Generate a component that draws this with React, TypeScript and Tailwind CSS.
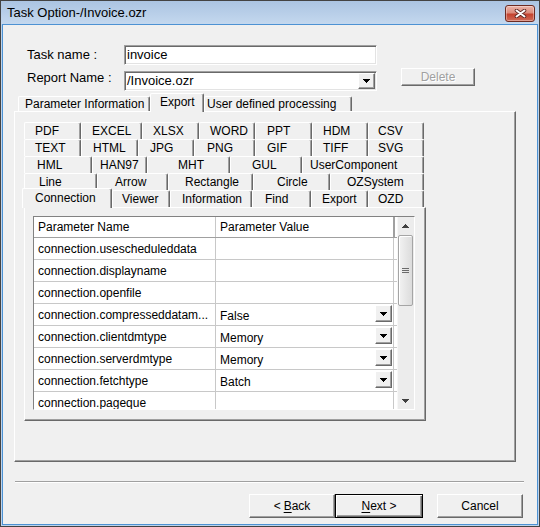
import React from "react";

// 탭 한 칸 (폭, 글자 왼쪽 여백)
type Tab = { label: string; w: string; pl: string };

// 파라미터 행
type Row = { name: string; value: string; combo: boolean };

const RAISED =
    "border border-t-white border-l-white border-r-[#696969] border-b-[#696969] shadow-[inset_-1px_-1px_0_#a0a0a0] bg-[#f0f0f0]";
const SUNKEN =
    "border border-t-[#a0a0a0] border-l-[#a0a0a0] border-r-white border-b-white shadow-[inset_1px_1px_0_#696969,inset_-1px_-1px_0_#e3e3e3] bg-white";
const TAB =
    "flex shrink-0 items-center rounded-t-[2px] border-t border-l border-r border-t-white border-l-white border-r-[#696969] shadow-[inset_-1px_0_0_#a0a0a0] bg-[#f0f0f0] whitespace-nowrap";

// 내보내기 탭 줄 (위에서 아래 순서)
const TAB_ROWS: Tab[][] = [
    [
        { label: "PDF", w: "w-[57px]", pl: "pl-[10px]" },
        { label: "EXCEL", w: "w-[61px]", pl: "pl-[10px]" },
        { label: "XLSX", w: "w-[57px]", pl: "pl-[10px]" },
        { label: "WORD", w: "w-[56px]", pl: "pl-[10px]" },
        { label: "PPT", w: "w-[57px]", pl: "pl-[11px]" },
        { label: "HDM", w: "w-[56px]", pl: "pl-[10px]" },
        { label: "CSV", w: "w-[56px]", pl: "pl-[9px]" },
    ],
    [
        { label: "TEXT", w: "w-[57px]", pl: "pl-[10px]" },
        { label: "HTML", w: "w-[57px]", pl: "pl-[11px]" },
        { label: "JPG", w: "w-[56px]", pl: "pl-[11px]" },
        { label: "PNG", w: "w-[61px]", pl: "pl-[12px]" },
        { label: "GIF", w: "w-[57px]", pl: "pl-[11px]" },
        { label: "TIFF", w: "w-[56px]", pl: "pl-[10px]" },
        { label: "SVG", w: "w-[56px]", pl: "pl-[9px]" },
    ],
    [
        { label: "HML", w: "w-[68px]", pl: "pl-[12px]" },
        { label: "HAN97", w: "w-[55px]", pl: "pl-[7px]" },
        { label: "MHT", w: "w-[83px]", pl: "pl-[30px]" },
        { label: "GUL", w: "w-[72px]", pl: "pl-[21px]" },
        { label: "UserComponent", w: "w-[122px]", pl: "pl-[7px]" },
    ],
    [
        { label: "Line", w: "w-[73px]", pl: "pl-[14px]" },
        { label: "Arrow", w: "w-[71px]", pl: "pl-[17px]" },
        { label: "Rectangle", w: "w-[85px]", pl: "pl-[16px]" },
        { label: "Circle", w: "w-[77px]", pl: "pl-[23px]" },
        { label: "OZSystem", w: "w-[94px]", pl: "pl-[16px]" },
    ],
];

const FRONT_ROW: Tab[] = [
    { label: "Connection", w: "w-[90px]", pl: "pl-[12px]" },
    { label: "Viewer", w: "w-[58px]", pl: "pl-[9px]" },
    { label: "Information", w: "w-[82px]", pl: "pl-[11px]" },
    { label: "Find", w: "w-[59px]", pl: "pl-[12px]" },
    { label: "Export", w: "w-[57px]", pl: "pl-[10px]" },
    { label: "OZD", w: "w-[56px]", pl: "pl-[9px]" },
];

const ROWS: Row[] = [
    { name: "connection.usescheduleddata", value: "", combo: false },
    { name: "connection.displayname", value: "", combo: false },
    { name: "connection.openfile", value: "", combo: false },
    { name: "connection.compresseddatam...", value: "False", combo: true },
    { name: "connection.clientdmtype", value: "Memory", combo: true },
    { name: "connection.serverdmtype", value: "Memory", combo: true },
    { name: "connection.fetchtype", value: "Batch", combo: true },
    { name: "connection.pageque", value: "", combo: false },
];

// 콤보 화살표
function Tri({ up = false, color = "#000" }: { up?: boolean; color?: string }) {
    return (
        <svg width="7" height="4" viewBox="0 0 7 4" shapeRendering="crispEdges">
            <path d={up ? "M0 4h7L3.5 0z" : "M0 0h7L3.5 4z"} fill={color} />
        </svg>
    );
}

function ComboButton({ className = "" }: { className?: string }) {
    return (
        <div className={`${RAISED} flex items-center justify-center ${className}`}>
            <Tri />
        </div>
    );
}

function TitleBar() {
    return (
        <div className="flex h-[23px] items-center justify-between bg-gradient-to-b from-[#abc4e2] to-[#c4d8ee] pl-[6px] pr-[4px]">
            <span className="text-[13px] text-black">Task Option-/Invoice.ozr</span>

            {/* 닫기 버튼 */}
            <div className="mt-[1px] flex h-[17px] w-[30px] items-center justify-center rounded-[3px] border border-[#6d2a21] bg-[linear-gradient(to_bottom,#ebb3a7_0%,#dc8c7c_45%,#c4432f_55%,#d06c58_100%)] shadow-[inset_0_0_0_1px_rgba(255,255,255,0.35)]">
                <svg width="13" height="9" viewBox="0 0 13 9">
                    <path d="M2.5 1.5L10.5 7.5M10.5 1.5L2.5 7.5" stroke="#5a2520" strokeWidth="3.6" strokeLinecap="round" />
                    <path d="M2.5 1.5L10.5 7.5M10.5 1.5L2.5 7.5" stroke="#fff" strokeWidth="2" strokeLinecap="round" />
                </svg>
            </div>
        </div>
    );
}

function ParamTable() {
    return (
        <div className="ml-[8px] mt-[8px] flex h-[194px] w-[382px] overflow-hidden border border-t-[#828282] border-l-[#828282] border-r-white border-b-white bg-white">
            <div className="flex w-[363px] flex-col">
                {/* 헤더 */}
                <div className="flex h-[21px] shrink-0 border-b border-[#a0a0a0]">
                    <div className="flex w-[182px] items-center border-r border-[#c8c8c8] pl-[4px]">Parameter Name</div>
                    <div className="flex w-[178px] items-center border-r border-[#a0a0a0] pl-[4px] shadow-[1px_0_0_#a0a0a0]">Parameter Value</div>
                </div>

                {ROWS.map((row) => (
                    <div key={row.name} className="flex h-[22px] shrink-0 border-b border-[#c8c8c8]">
                        <div className="flex w-[182px] items-center border-r border-[#c8c8c8] pl-[4px] whitespace-nowrap">
                            {row.name}
                        </div>
                        <div className="flex w-[178px] items-start justify-between border-r border-[#c8c8c8] pl-[4px]">
                            <span className="mt-[3px]">{row.value}</span>
                            {row.combo && <ComboButton className="mr-[1px] mt-[1px] h-[17px] w-[17px]" />}
                        </div>
                    </div>
                ))}
            </div>

            {/* 세로 스크롤바 */}
            <div className="flex w-[17px] shrink-0 flex-col bg-[#ececec] shadow-[inset_1px_0_0_#f7f7f7]">
                <div className="flex h-[17px] shrink-0 items-center justify-center">
                    <Tri up color="#404040" />
                </div>
                <div className="mx-[1px] mt-[1px] flex h-[71px] shrink-0 flex-col items-center justify-center gap-[1px] rounded-[2px] border border-[#a5a5a5] bg-gradient-to-r from-[#f2f2f2] to-[#dcdcdc] shadow-[inset_1px_1px_0_#fff]">
                    <div className="h-px w-[7px] bg-[#6a6a6a]" />
                    <div className="h-px w-[7px] bg-[#6a6a6a]" />
                    <div className="h-px w-[7px] bg-[#6a6a6a]" />
                </div>
                <div className="flex-1" />
                <div className="flex h-[17px] shrink-0 items-center justify-center">
                    <Tri color="#404040" />
                </div>
            </div>
        </div>
    );
}

function ExportPanel() {
    return (
        <div className={`ml-[11px] h-[351px] w-[502px] ${RAISED} pl-[9px] pt-[10px]`}>
            {/* 뒤쪽 탭 줄 */}
            {TAB_ROWS.map((row, i) => (
                <div key={i} className="flex h-[17px]">
                    {row.map((tab) => (
                        <div key={tab.label} className={`${TAB} ${tab.w} ${tab.pl} h-[17px]`}>
                            {tab.label}
                        </div>
                    ))}
                </div>
            ))}

            {/* 앞쪽 탭 줄 */}
            <div className="-ml-[2px] flex h-[17px] items-end">
                {FRONT_ROW.map((tab, i) =>
                    i === 0 ? (
                        <div key={tab.label} className={`${TAB} ${tab.w} ${tab.pl} relative z-10 -mb-px h-[20px] pb-[2px]`}>
                            {tab.label}
                        </div>
                    ) : (
                        <div key={tab.label} className={`${TAB} ${tab.w} ${tab.pl} h-[17px]`}>
                            {tab.label}
                        </div>
                    )
                )}
            </div>

            {/* Connection 내용 */}
            <div className={`h-[214px] w-[402px] ${RAISED}`}>
                <ParamTable />
            </div>
        </div>
    );
}

export default function App() {
    return (
        <div className="h-[527px] w-[540px] font-['Liberation_Sans',Arial,sans-serif] text-[12px] text-black">
            <div className="flex h-full w-full flex-col border border-[#434343] bg-[#bcd3ec]">
                <TitleBar />

                <div className="mx-[1px] mb-[1px] flex flex-1 flex-col border border-[#4d92d3] bg-[#f0f0f0]">
                    {/* 작업명 */}
                    <div className="ml-[24px] mt-[20px] flex items-center text-[13px]">
                        <span className="w-[97px]">Task name :</span>
                        <div className={`${SUNKEN} flex h-[20px] w-[253px] items-center pl-[2px]`}>invoice</div>
                    </div>

                    {/* 보고서명 + 삭제 */}
                    <div className="ml-[24px] mt-[6px] flex items-start">
                        <span className="-mt-[3px] w-[97px] text-[13px]">Report Name :</span>
                        <div className={`${SUNKEN} flex h-[20px] w-[253px] items-center justify-between pl-[2px] pr-[1px] text-[13px]`}>
                            <span>/Invoice.ozr</span>
                            <ComboButton className="h-[16px] w-[17px]" />
                        </div>
                        <div className={`${RAISED} -mt-[3px] ml-[24px] flex h-[18px] w-[74px] items-center justify-center text-[#a0a0a0] [text-shadow:1px_1px_0_#fff]`}>
                            Delete
                        </div>
                    </div>

                    {/* 상단 탭 */}
                    <div className="ml-[15px] mt-[2px] flex h-[18px] items-end">
                        <div className={`${TAB} h-[15px] w-[132px] pl-[6px]`}>Parameter Information</div>
                        <div className={`${TAB} relative z-10 -mb-px h-[19px] w-[54px] pb-[2px] pl-[9px]`}>Export</div>
                        <div className={`${TAB} h-[15px] w-[148px] pl-[2px]`}>User defined processing</div>
                    </div>

                    <ExportPanel />

                    {/* 구분선 */}
                    <div className="ml-[12px] mt-[19px] h-[2px] w-[509px] border-t border-b border-t-[#a0a0a0] border-b-white" />

                    {/* 하단 버튼 */}
                    <div className="mt-[11px] flex">
                        <div className={`${RAISED} ml-[246px] flex h-[24px] w-[86px] items-center justify-center`}>
                            &lt; <span className="ml-[3px] underline underline-offset-2">B</span>ack
                        </div>
                        <div className="flex h-[24px] w-[88px] items-center justify-center border border-black bg-[#f0f0f0] shadow-[inset_1px_1px_0_#fff,inset_-1px_-1px_0_#696969,inset_-2px_-2px_0_#a0a0a0]">
                            <span className="underline underline-offset-2">N</span>ext &gt;
                        </div>
                        <div className={`${RAISED} ml-[14px] flex h-[24px] w-[86px] items-center justify-center`}>
                            Cancel
                        </div>
                    </div>
                </div>
            </div>
        </div>
    );
}
